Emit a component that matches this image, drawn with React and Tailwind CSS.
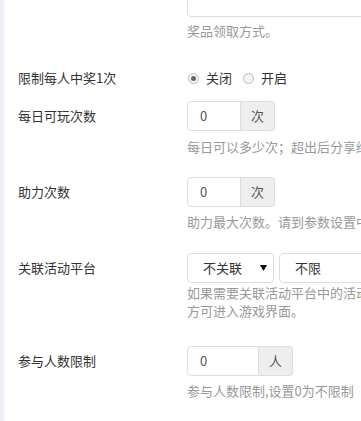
import React from 'react';

const font = { fontFamily: '"Noto Sans CJK SC", "Noto Sans", sans-serif' };

function Label({ children }) {
  return <div className="w-[169px] shrink-0 text-[13px] text-[#333]">{children}</div>;
}

function Help({ className = '', children }) {
  return <div className={`pl-[169px] text-[13px] leading-[18px] text-[#999] whitespace-nowrap ${className}`}>{children}</div>;
}

function Radio({ checked, label }) {
  return (
    <label className="flex items-center gap-[7px]">
      <span className="flex h-[11px] w-[11px] items-center justify-center rounded-full border border-[#bbb] bg-[#f4f4f4]">
        {checked && <span className="h-[5px] w-[5px] rounded-full bg-[#666]" />}
      </span>
      <span className="text-[13px] text-[#333]">{label}</span>
    </label>
  );
}

function InputGroup({ inputW, unit }) {
  return (
    <div className="flex h-[30px]">
      <div className={`${inputW} flex items-center rounded-l-[4px] border border-[#ddd] pl-[12px] text-[13px] text-[#555]`}>0</div>
      <div className="flex w-[34px] items-center justify-center rounded-r-[4px] border border-l-0 border-[#ddd] bg-[#eee] text-[13px] text-[#555]">{unit}</div>
    </div>
  );
}

export default function App() {
  return (
    <div className="flex h-[421px] w-[361px] overflow-hidden bg-white" style={font}>
      <div className="w-[4px] shrink-0 bg-[#eef0f7]" />
      <div className="flex-1 pl-[14px]">
        <div className="pl-[169px]">
          <div className="-mt-[13px] h-[30px] w-[220px] rounded-[4px] border border-[#ddd]" />
        </div>
        <Help className="mt-[5px]">奖品领取方式。</Help>

        <div className="mt-[28px] flex h-[20px] items-center">
          <Label>限制每人中奖1次</Label>
          <div className="flex items-center gap-[11px] pl-[1px]">
            <Radio checked label="关闭" />
            <Radio label="开启" />
          </div>
        </div>

        <div className="mt-[13px] flex items-center">
          <Label>每日可玩次数</Label>
          <InputGroup inputW="w-[54px]" unit="次" />
        </div>
        <Help className="mt-[7px]">每日可以多少次；超出后分享给好友可增加次数</Help>

        <div className="mt-[21px] flex items-center">
          <Label>助力次数</Label>
          <InputGroup inputW="w-[54px]" unit="次" />
        </div>
        <Help className="mt-[6px]">助力最大次数。请到参数设置中设置助力规则</Help>

        <div className="mt-[22px] flex items-center">
          <Label>关联活动平台</Label>
          <div className="flex gap-[5px]">
            <div className="relative flex h-[30px] w-[87px] items-center rounded-[4px] border border-[#ddd] pl-[15px] text-[13px] text-[#333]">
              不关联
              <svg className="absolute right-[6px] top-[11px]" width="7" height="6" viewBox="0 0 7 6">
                <path d="M0 0H7L3.5 6Z" fill="#111" />
              </svg>
            </div>
            <div className="flex h-[30px] w-[120px] items-center rounded-[4px] border border-[#ddd] pl-[15px] text-[13px] text-[#333]">不限</div>
          </div>
        </div>
        <Help className="mt-[1px]">
          如果需要关联活动平台中的活动，请选择活动，
          <br />
          方可进入游戏界面。
        </Help>

        <div className="mt-[26px] flex items-center">
          <Label>参与人数限制</Label>
          <InputGroup inputW="w-[72px]" unit="人" />
        </div>
        <Help className="mt-[6px]">参与人数限制,设置0为不限制</Help>
      </div>
    </div>
  );
}
